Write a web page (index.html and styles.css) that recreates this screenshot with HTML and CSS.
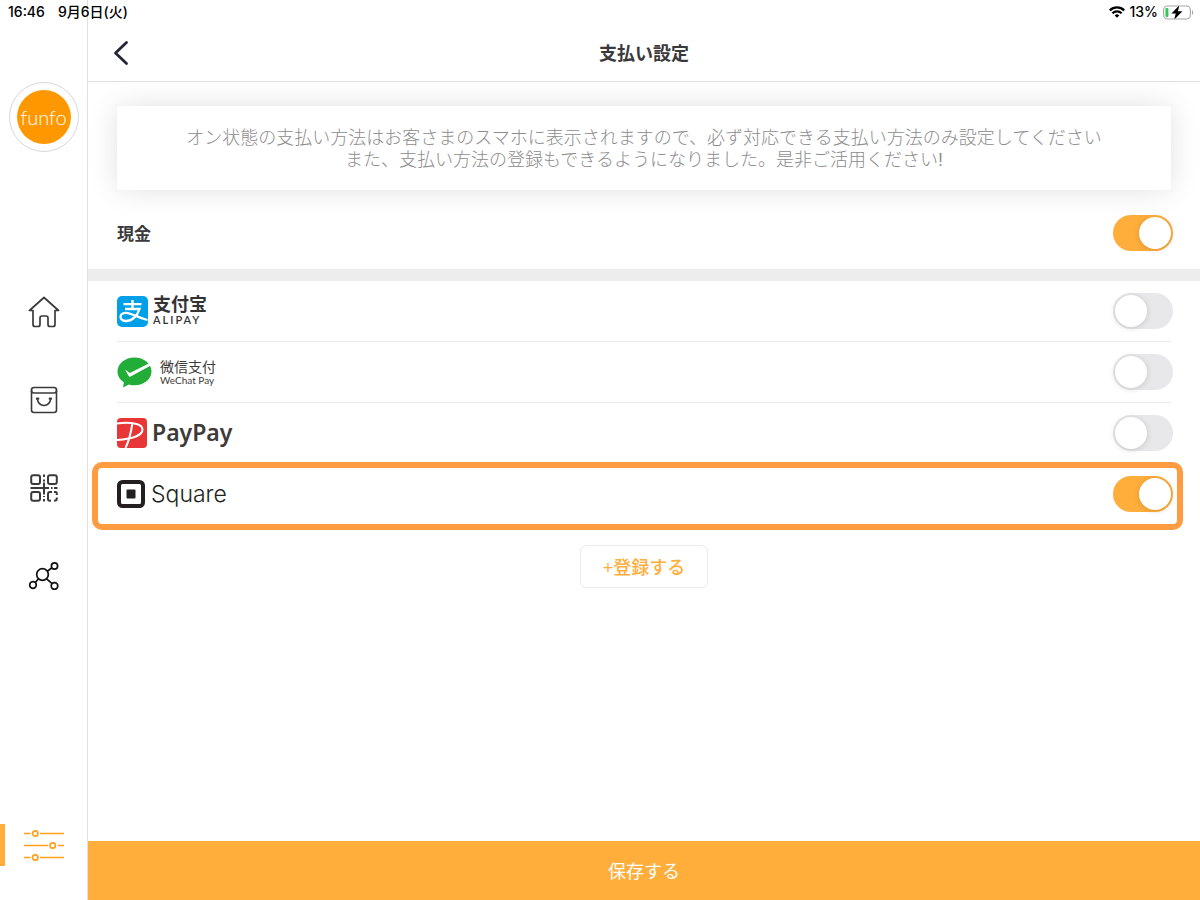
FILE: index.html
```
<!DOCTYPE html>
<html lang="ja">
<head>
    <meta charset="UTF-8">
    <meta name="viewport" content="width=device-width, initial-scale=1.0">
    <title>支払い設定</title>
    <link rel="stylesheet" href="styles.css">
</head>
<body>
    <div class="status-bar">
        <div class="status-left">
            <span>16:46</span>
            <span>9月6日(火)</span>
        </div>
        <div class="status-right">
            <svg width="16" height="12" viewBox="0 0 16 12" fill="none" stroke="#000" stroke-width="2.2">
                <path d="M.8 4.400a10.200 10.200 0 0 1 14.400 0M3.400 7.200a6.500 6.500 0 0 1 9.200 0"/>
                <path d="M8 11.800L5.700 9.400a3.300 3.300 0 0 1 4.600 0z" fill="#000" stroke="none"/>
            </svg>
            <span>13%</span>
            <svg width="31" height="15" viewBox="0 0 31 15">
                <rect x=".6" y="1" width="26.8" height="13" rx="4" fill="#fff" stroke="#a6a6a6" stroke-width="1.1"/>
                <path d="M29 5.200c1.600.5 1.600 4.100 0 4.600z" fill="#a6a6a6"/>
                <rect x="2.4" y="3" width="3" height="9" rx="1" fill="#34c759"/>
                <path d="M16.400.2L8.400 8.600h4.300l-1.500 6.200 8.200-8.500h-4.500z" fill="#000" stroke="#fff" stroke-width="1" paint-order="stroke"/>
            </svg>
        </div>
    </div>

    <div class="app">
        <aside class="sidebar">
            <a href="#" class="brand"><span>funfo</span></a>
            <nav class="side-nav">
                <a href="#" aria-label="ホーム">
                    <svg width="32" height="32" viewBox="0 0 32 32" fill="none" stroke="#3a3a3a" stroke-width="1.7" stroke-linejoin="round" stroke-linecap="round">
                        <path d="M16 1.500L1.500 14.500H5V28.500q0 2 2 2h3q2 0 2-2V22q0-2 2-2h4q2 0 2 2v6.500q0 2 2 2h3q2 0 2-2V14.500h3.500z"/>
                    </svg>
                </a>
                <a href="#" aria-label="注文">
                    <svg width="28" height="28" viewBox="0 0 28 28" fill="none" stroke="#3a3a3a" stroke-width="1.6" stroke-linecap="round">
                        <rect x="1.5" y="1.5" width="25" height="25" rx="2.5"/>
                        <path d="M1.500 4.500q0 2.500 2.500 2.500h20q2.500 0 2.500-2.500M7.500 13a6.500 6.500 0 0 0 13 0"/>
                        <path d="M7 12.600h1.200M19.800 12.600H21" stroke-width="2.4"/>
                    </svg>
                </a>
                <a href="#" aria-label="QRコード">
                    <svg width="28" height="28" viewBox="0 0 28 28" fill="none" stroke="#3a3a3a" stroke-width="2">
                        <rect x="1.2" y="1.2" width="8.8" height="8.8" rx="2"/>
                        <rect x="18" y="1.2" width="8.8" height="8.8" rx="2"/>
                        <rect x="1.2" y="18" width="8.8" height="8.8" rx="2"/>
                        <path d="M14 .5v2.500M14 5.500v2M14 8.500v12M.5 14h18.500M21 14h1.500M24 14h3.500M14 22v1M14 25v2.500"/>
                        <path d="M22 18h-2q-2 0-2 2v5q0 1.800 2 1.800h1M24 18h1.500q1.300 0 1.300 1.300V21M26.800 23.500v1q0 2.300-2.800 2.300"/>
                    </svg>
                </a>
                <a href="#" aria-label="連携">
                    <svg width="30" height="28" viewBox="0 0 30 28" fill="none" stroke="#111" stroke-width="1.7">
                        <circle cx="13.5" cy="12.5" r="5.8"/>
                        <circle cx="25.5" cy="4" r="3.1"/>
                        <circle cx="4" cy="23" r="3.3"/>
                        <circle cx="25.5" cy="24" r="3.3"/>
                        <path d="M18.300 9.200l4.700-3.400M9.500 16.800l-3.200 3.800M17.600 16.800l5.500 4.900"/>
                    </svg>
                </a>
            </nav>
            <a href="#" class="side-settings" aria-label="設定">
                <svg width="40" height="32" viewBox="0 0 40 32" fill="none" stroke="#ff9f1a" stroke-width="1.7">
                    <path d="M0 4.500h6.500M16 4.500h24M0 16.500h24M34 16.500h6M0 28.500h6.500M16 28.500h24"/>
                    <circle cx="11.2" cy="4.5" r="2.7"/>
                    <circle cx="28.7" cy="16.5" r="2.7"/>
                    <circle cx="11.2" cy="28.5" r="2.7"/>
                </svg>
            </a>
        </aside>

        <div class="page">
            <header class="page-header">
                <button type="button" class="back-btn" aria-label="戻る">
                    <svg width="16" height="26" viewBox="0 0 16 26" fill="none" stroke="#25253a" stroke-width="2.8" stroke-linecap="round" stroke-linejoin="round">
                        <path d="M13.500 2.500L2.500 13l11 10.500"/>
                    </svg>
                </button>
                <h1>支払い設定</h1>
            </header>

            <main class="content">
                <p class="notice">オン状態の支払い方法はお客さまのスマホに表示されますので、必ず対応できる支払い方法のみ設定してください<br>また、支払い方法の登録もできるようになりました。是非ご活用ください!</p>

                <div class="cash-row">
                    <label for="cash">現金</label>
                    <input type="checkbox" class="switch" id="cash" checked>
                </div>

                <ul class="pay-list">
                    <li class="pay-item">
                        <label for="alipay" class="logo alipay">
                            <svg width="31" height="31" viewBox="0 0 31 31" fill="none">
                                <rect width="31" height="31" rx="5" fill="#00a0e9"/>
                                <path d="M6.500 8.200h18M15.500 4v9M8 13h14.500C20.500 19.500 15.500 25 9.300 25 5.500 25 3.500 23 3.500 20.800c0-2.400 2.300-4 5.400-4C14.500 16.800 20 21.500 30.500 24" stroke="#fff" stroke-width="2.3"/>
                            </svg>
                            <span class="logo-text">
                                <span class="logo-main">支付宝</span>
                                <span class="logo-sub">ALIPAY</span>
                            </span>
                        </label>
                        <input type="checkbox" class="switch" id="alipay">
                    </li>
                    <li class="pay-item">
                        <label for="wechat" class="logo wechat">
                            <svg width="35" height="31" viewBox="0 0 35 31">
                                <path d="M17.500.5C8 .5.5 6.800.5 14.500c0 4.600 2.500 8.300 6.400 10.800L6 30.500l5.900-3.100c1.800.6 3.600.8 5.600.8 9.500 0 17-6.100 17-13.700C34.500 6.800 27 .5 17.500.5z" fill="#22ac38"/>
                                <path d="M8 12.400l4.800 3.500L32.300 6.300l1.500 2.200-20.200 10.900q-1.500.8-2.200-.9z" fill="#fff"/>
                            </svg>
                            <span class="logo-text">
                                <span class="logo-main">微信支付</span>
                                <span class="logo-sub">WeChat Pay</span>
                            </span>
                        </label>
                        <input type="checkbox" class="switch" id="wechat">
                    </li>
                    <li class="pay-item">
                        <label for="paypay" class="logo paypay">
                            <svg width="30" height="30" viewBox="0 0 30 30" fill="none">
                                <rect width="30" height="30" rx="4" fill="#e83535"/>
                                <path d="M0 5.500C12 4 25.500 5 25.500 11.500c0 6-11 9.500-25.500 10.500" stroke="#fff" stroke-width="2"/>
                                <path d="M15.300 5.500C14 15 11.800 23 8.500 30" stroke="#fff" stroke-width="2"/>
                            </svg>
                            <span>PayPay</span>
                        </label>
                        <input type="checkbox" class="switch" id="paypay">
                    </li>
                    <li class="pay-item highlight">
                        <label for="square" class="logo square">
                            <svg width="28" height="28" viewBox="0 0 28 28">
                                <rect x="2" y="2" width="24" height="24" rx="3.5" fill="#fff" stroke="#231f20" stroke-width="4"/>
                                <rect x="9.5" y="9.5" width="9" height="9" rx="1" fill="#231f20"/>
                            </svg>
                            <span>Square</span>
                        </label>
                        <input type="checkbox" class="switch" id="square" checked>
                    </li>
                </ul>

                <button type="button" class="add-btn">+登録する</button>
            </main>

            <button type="button" class="save-btn">保存する</button>
        </div>
    </div>
</body>
</html>
```
FILE: styles.css
```
:root {
    --primary-color: #ffae3b;
    --highlight-color: #ff9c42;
    --line-color: #e0e0e0;
    --text-color: #3a3a3a;
}

* {
    margin: 0;
    padding: 0;
    box-sizing: border-box;
}

body {
    font-family: "Liberation Sans", "Noto Sans CJK JP", sans-serif;
    background-color: #fff;
    color: var(--text-color);
}

button {
    font-family: inherit;
    cursor: pointer;
}

svg {
    display: block;
    flex-shrink: 0;
}

/* ステータスバー */
.status-bar {
    position: absolute;
    top: 0;
    left: 0;
    right: 0;
    z-index: 2;
    display: flex;
    justify-content: space-between;
    padding: 2px 6px 0 8px;
    font-family: Inter, "Noto Sans CJK JP", sans-serif;
    font-size: 14px;
    font-weight: 500;
    line-height: 20px;
    color: #000;
}

.status-left,
.status-right {
    display: flex;
    align-items: center;
}

.status-left {
    gap: 13px;
}

.status-right {
    gap: 5px;
}

.app {
    display: flex;
    min-height: 100vh;
}

/* サイドバー */
.sidebar {
    display: flex;
    flex-direction: column;
    align-items: center;
    flex-shrink: 0;
    width: 88px;
    padding: 82px 0 34px;
    border-right: 1px solid var(--line-color);
}

.brand {
    display: flex;
    width: 70px;
    height: 70px;
    padding: 7px;
    border: 1px solid #d8d8d8;
    border-radius: 50%;
    text-decoration: none;
}

.brand span {
    flex: 1;
    border-radius: 50%;
    background-color: #ff9800;
    color: #fff;
    font-family: Lato, sans-serif;
    font-size: 20px;
    font-weight: 300;
    line-height: 54px;
    text-align: center;
}

.side-nav {
    display: flex;
    flex-direction: column;
    width: 100%;
    margin-top: 116px;
}

.side-nav a {
    display: flex;
    align-items: center;
    justify-content: center;
    height: 88px;
}

.side-settings {
    display: flex;
    align-items: center;
    justify-content: center;
    width: 100%;
    height: 42px;
    margin-top: auto;
    padding-right: 5px;
    border-left: 5px solid var(--primary-color);
}

/* メイン */
.page {
    display: flex;
    flex-direction: column;
    flex: 1;
    min-width: 0;
}

.page-header {
    display: grid;
    grid-template-columns: 40px 1fr 40px;
    align-items: center;
    padding: 24px 20px 0;
    height: 82px;
    border-bottom: 1px solid var(--line-color);
}

.page-header h1 {
    padding-bottom: 2px;
    font-size: 18px;
    font-weight: 600;
    text-align: center;
}

.back-btn {
    justify-self: start;
    padding: 0 5px;
    border: none;
    background: none;
}

.content {
    flex: 1;
    padding-top: 24px;
    overflow: hidden;
}

.notice {
    margin: 0 29px;
    padding: 21px 16px 19px;
    border-radius: 4px;
    background-color: #fff;
    box-shadow: 0 0 30px rgba(0, 0, 0, 0.12);
    color: #8c8c8c;
    font-size: 18px;
    font-weight: 300;
    line-height: 22px;
    text-align: center;
}

.cash-row {
    display: flex;
    align-items: center;
    justify-content: space-between;
    height: 91px;
    padding: 6px 29px 0;
    border-bottom: 12px solid #ededed;
    font-size: 17px;
    font-weight: 700;
}

.pay-list {
    padding: 0 29px;
    list-style: none;
}

.pay-item {
    position: relative;
    display: flex;
    align-items: center;
    justify-content: space-between;
    height: 61px;
    border-bottom: 1px solid #ebebeb;
}

.pay-item:last-child {
    border-bottom-color: transparent;
}

.highlight::after {
    content: "";
    position: absolute;
    top: -2px;
    right: -12px;
    bottom: -6px;
    left: -25px;
    border: 6px solid var(--highlight-color);
    border-radius: 10px;
    pointer-events: none;
}

/* スイッチ */
.switch {
    appearance: none;
    width: 60px;
    height: 36px;
    margin-right: -2px;
    padding: 2px;
    border-radius: 18px;
    background-color: #e8e8ea;
    cursor: pointer;
}

.switch::before {
    content: "";
    display: block;
    width: 32px;
    height: 32px;
    border-radius: 50%;
    background-color: #fff;
    box-shadow: 0 1px 6px rgba(0, 0, 0, 0.15);
}

.switch:checked {
    background-color: var(--primary-color);
}

.switch:checked::before {
    margin-left: auto;
}

/* 決済ロゴ */
.logo {
    display: flex;
    align-items: center;
    gap: 5px;
}

.logo-text {
    display: flex;
    flex-direction: column;
}

.alipay {
    color: #333;
    font-family: Lato, "Noto Sans CJK SC", sans-serif;
}

.alipay .logo-main {
    font-size: 18px;
    font-weight: 700;
    line-height: 18px;
}

.alipay .logo-sub {
    font-size: 11px;
    font-weight: 600;
    letter-spacing: 2px;
    line-height: 14px;
}

.wechat {
    gap: 8px;
    color: #3e3a39;
    font-family: Lato, "Noto Sans CJK SC", sans-serif;
}

.wechat .logo-main {
    font-size: 14px;
    line-height: 15px;
}

.wechat .logo-sub {
    font-size: 10px;
    line-height: 12px;
}

.paypay {
    color: #3e3a39;
    font-family: "Noto Sans", sans-serif;
    font-size: 23px;
    font-weight: 600;
    line-height: 30px;
}

.paypay span {
    padding-bottom: 2px;
}

.square {
    gap: 6px;
    color: #231f20;
    font-family: Inter, sans-serif;
    font-size: 23px;
    font-weight: 300;
}

.add-btn {
    display: block;
    height: 43px;
    margin: 20px auto 0;
    padding: 0 22px 2px;
    border: 1px solid #ebebeb;
    border-radius: 6px;
    background-color: #fff;
    color: var(--primary-color);
    font-size: 18px;
    font-weight: 500;
}

.save-btn {
    height: 59px;
    padding-bottom: 2px;
    border: none;
    background-color: var(--primary-color);
    color: #fff;
    font-size: 18px;
    font-weight: 400;
}
```
